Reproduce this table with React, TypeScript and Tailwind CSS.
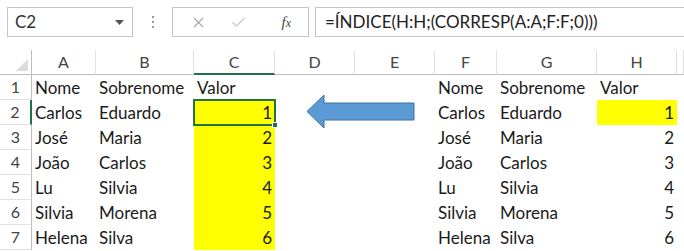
import { X, Check } from 'lucide-react'

const COLS = ['A', 'B', 'C', 'D', 'E', 'F', 'G', 'H', '']

const ROWS = [
  ['Nome', 'Sobrenome', 'Valor'],
  ['Carlos', 'Eduardo', '1'],
  ['José', 'Maria', '2'],
  ['João', 'Carlos', '3'],
  ['Lu', 'Silvia', '4'],
  ['Silvia', 'Morena', '5'],
  ['Helena', 'Silva', '6'],
]

const font = { fontFamily: 'Lato, "Open Sans", sans-serif' }

function Cell({ children, right, yellow, className = '' }: { children?: React.ReactNode; right?: boolean; yellow?: boolean; className?: string }) {
  return (
    <div
      className={`h-[25px] flex items-center whitespace-nowrap overflow-visible text-[17px] text-[#1a1a1a] ${
        right ? 'justify-end pr-[3px]' : 'pl-[3px]'
      } ${yellow ? 'bg-[#ffff00]' : ''} ${className}`}
    >
      {children}
    </div>
  )
}

export default function App() {
  return (
    <div className="relative w-[684px] h-[251px] overflow-hidden bg-white" style={font}>
      {/* formula bar */}
      <div className="h-[50px] flex items-start pt-[7px] pl-[7px] gap-0">
        <div className="w-[126px] h-[30px] border border-[#c6c6c6] flex items-center justify-between pl-[7px] pr-[8px] text-[17px] text-[#333]">
          <span>C2</span>
          <svg width="9" height="5" viewBox="0 0 9 5">
            <path d="M0 0h9L4.5 5z" fill="#555" />
          </svg>
        </div>
        <div className="w-[39px] h-[30px] flex flex-col items-center justify-center gap-[3px]">
          <span className="w-[2px] h-[2px] bg-[#999]" />
          <span className="w-[2px] h-[2px] bg-[#999]" />
          <span className="w-[2px] h-[2px] bg-[#999]" />
        </div>
        <div className="w-[137px] h-[30px] border border-[#c6c6c6] flex items-center pl-[17px] pr-[17px]">
          <X size={17} strokeWidth={1.5} className="text-[#a6a6a6]" />
          <Check size={17} strokeWidth={1.5} className="text-[#c0c0c0] ml-[23px]" />
          <span className="ml-auto text-[15px] italic text-[#444]" style={{ fontFamily: '"Liberation Serif", serif' }}>
            f<span className="text-[12px]">x</span>
          </span>
        </div>
        <div className="ml-[6px] flex-1 h-[30px] border border-r-0 border-[#c6c6c6] flex items-center pl-[9px] text-[17px] text-[#222]">
          =ÍNDICE(H:H;(CORRESP(A:A;F:F;0)))
        </div>
      </div>

      {/* sheet */}
      <div className="grid grid-cols-[32px_64px_98px_81px_80px_80px_62px_100px_80px_1fr]">
        {/* column headers */}
        <div className="h-[25px] border-r border-b border-[#bdbdbd] relative">
          <svg className="absolute right-[3px] bottom-[3px]" width="12" height="12" viewBox="0 0 12 12">
            <path d="M12 0v12H0z" fill="#dcdcdc" />
          </svg>
        </div>
        {COLS.map((c, i) => (
          <div
            key={i}
            className={`h-[25px] flex items-center justify-center text-[16px] text-[#444] border-r border-[#e1e1e1] ${
              c === 'C' ? 'border-b-2 border-b-[#217346]' : 'border-b border-b-[#bdbdbd]'
            }`}
          >
            {c}
          </div>
        ))}

        {ROWS.map((r, i) => {
          const n = i + 1
          const yellowLeft = n >= 2
          const yellowRight = n === 2
          return [
            <div
              key={`h${n}`}
              className={`h-[25px] flex items-center justify-center text-[16px] text-[#444] border-b border-[#e1e1e1] ${
                n === 2 ? 'border-r-2 border-r-[#217346]' : 'border-r border-r-[#bdbdbd]'
              }`}
            >
              {n}
            </div>,
            <Cell key={`a${n}`}>{r[0]}</Cell>,
            <Cell key={`b${n}`}>{r[1]}</Cell>,
            <Cell key={`c${n}`} right={n > 1} yellow={yellowLeft} className={n === 2 ? 'relative' : ''}>
              {r[2]}
              {n === 2 && (
                <>
                  <span className="absolute -left-px -top-px -right-px -bottom-px border-2 border-[#217346]" />
                  <span className="absolute -right-[3px] -bottom-[3px] w-[6px] h-[6px] bg-[#217346] border border-white" />
                </>
              )}
            </Cell>,
            <Cell key={`d${n}`} />,
            <Cell key={`e${n}`} />,
            <Cell key={`f${n}`}>{r[0]}</Cell>,
            <Cell key={`g${n}`}>{r[1]}</Cell>,
            <Cell key={`h2${n}`} right={n > 1} yellow={yellowRight}>
              {r[2]}
            </Cell>,
            <Cell key={`i${n}`} />,
          ]
        })}
      </div>

      {/* block arrow pointing from H back to C */}
      <svg className="absolute left-[306px] top-[94px]" width="110" height="36" viewBox="0 0 110 36">
        <path d="M1 17.5L18 1v8h90v17H18v8z" fill="#5b9bd5" stroke="#41719c" strokeWidth="1" />
      </svg>
    </div>
  )
}
